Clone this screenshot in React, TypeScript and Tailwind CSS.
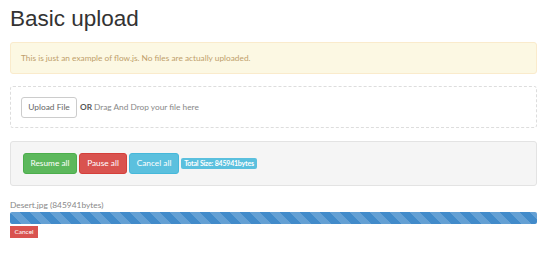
export default function App() {
  const lato = { fontFamily: "Lato, 'Open Sans', sans-serif" };
  return (
    <div className="min-h-[273px] bg-white pl-[10px] pr-[13px]" style={lato}>
      <h1
        className="pt-[5px] text-[22.5px] leading-[27px] text-[#333]"
        style={{ fontFamily: "'Liberation Sans', Arial, sans-serif" }}
      >
        Basic upload
      </h1>

      <div className="mt-[10px] flex h-[32px] items-center rounded-[3px] border border-[#faebcc] bg-[#fcf8e3] px-[10px] text-[8.3px] text-[#c09f6b]">
        This is just an example of flow.js. No files are actually uploaded.
      </div>

      <div className="mt-[12px] flex h-[42px] items-center rounded-[3px] border-[1.5px] border-dashed border-[#ddd] pl-[10px] text-[8.3px]">
        <button className="h-[21px] w-[56px] rounded-[3px] border border-[#ccc] bg-white text-[8.4px] text-[#666]">
          Upload File
        </button>
        <span className="ml-[3px] font-bold text-[#555]">OR</span>
        <span className="ml-[2px] text-[#888]">Drag And Drop your file here</span>
      </div>

      <div className="mt-[13px] flex h-[45px] items-center gap-[2px] rounded-[3px] border border-[#e3e3e3] bg-[#f5f5f5] pl-[12px]">
        <button className="h-[21px] w-[54px] rounded-[3px] border border-[#4cae4c] bg-[#5cb85c] text-[8.3px] text-white">
          Resume all
        </button>
        <button className="h-[21px] w-[48px] rounded-[3px] border border-[#d43f3a] bg-[#d9534f] text-[8.3px] text-white">
          Pause all
        </button>
        <button className="h-[21px] w-[50px] rounded-[3px] border border-[#46b8da] bg-[#5bc0de] text-[8.3px] text-white">
          Cancel all
        </button>
        <span className="flex h-[11px] w-[76px] items-center justify-center rounded-[2px] bg-[#5bc0de] text-[7px] font-bold tracking-[-0.2px] text-white">
          Total Size: 845941bytes
        </span>
      </div>

      <div className="mt-[13px] text-[8.4px] leading-[12px] text-[#888]">Desert.jpg (845941bytes)</div>
      <div
        className="mt-[1px] h-[12px] rounded-[2px] bg-[#428bca]"
        style={{
          backgroundImage:
            "linear-gradient(45deg, rgba(255,255,255,.18) 25%, transparent 25%, transparent 50%, rgba(255,255,255,.18) 50%, rgba(255,255,255,.18) 75%, transparent 75%, transparent)",
          backgroundSize: "20px 20px",
        }}
      />
      <button className="mt-[2px] flex h-[12px] w-[28px] items-center justify-center bg-[#d9534f] text-[6.5px] text-white">
        Cancel
      </button>
    </div>
  );
}
